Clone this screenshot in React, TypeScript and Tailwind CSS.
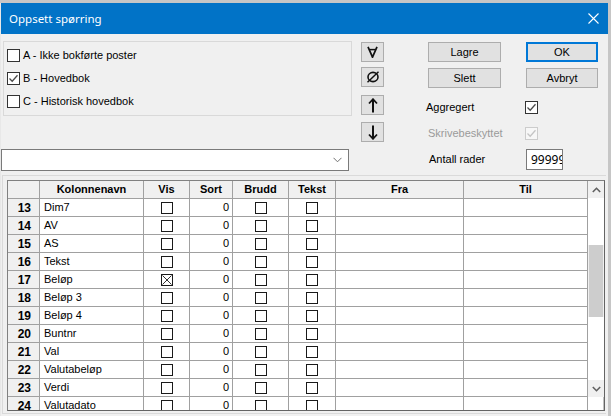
import React from "react";

const FONT = { fontFamily: '"Liberation Sans", Arial, sans-serif' };

function Check({ checked = false, disabled = false }: { checked?: boolean; disabled?: boolean }) {
  return (
    <div
      className={
        "w-[13px] h-[13px] border flex items-center justify-center shrink-0 " +
        (disabled ? "border-[#cccccc] bg-[#f7f7f7]" : "border-[#333333] bg-white")
      }
    >
      {checked && (
        <svg width="11" height="11" viewBox="0 0 11 11">
          <path
            d="M1.5 5.5 L4.2 8.2 L9.5 2.3"
            fill="none"
            stroke={disabled ? "#c4c4c4" : "#4a4a4a"}
            strokeWidth="1.3"
          />
        </svg>
      )}
    </div>
  );
}

function GridCheck({ x = false }: { x?: boolean }) {
  return (
    <div className="w-[12px] h-[12px] border border-[#1a1a1a] bg-white flex items-center justify-center">
      {x && (
        <svg width="10" height="10" viewBox="0 0 10 10">
          <path d="M0.5 0.5 L9.5 9.5 M9.5 0.5 L0.5 9.5" stroke="#333" strokeWidth="1" fill="none" />
        </svg>
      )}
    </div>
  );
}

function Btn({ children, primary = false, w }: { children: React.ReactNode; primary?: boolean; w: string }) {
  return (
    <div
      className={
        "h-[20px] flex items-center justify-center text-[11px] text-black bg-[#e1e1e1] " +
        w +
        (primary ? " border-2 border-[#0078d7]" : " border border-[#adadad]")
      }
    >
      {children}
    </div>
  );
}

function SymBtn({ children, mt }: { children: React.ReactNode; mt: string }) {
  return (
    <div
      className={
        "w-[23px] h-[20px] border border-[#adadad] bg-[#e1e1e1] flex items-center justify-center text-[#111] leading-none " +
        mt
      }
    >
      {children}
    </div>
  );
}

const rows: [number, string, boolean][] = [
  [13, "Dim7", false],
  [14, "AV", false],
  [15, "AS", false],
  [16, "Tekst", false],
  [17, "Beløp", true],
  [18, "Beløp 3", false],
  [19, "Beløp 4", false],
  [20, "Buntnr", false],
  [21, "Val", false],
  [22, "Valutabeløp", false],
  [23, "Verdi", false],
  [24, "Valutadato", false],
];

const cell = "h-[18px] border-r border-b border-[#a0a0a0] flex items-center";
const head = cell + " bg-[#f0f0f0] justify-center font-bold text-[11px]";

export default function App() {
  return (
    <div className="w-[611px] h-[416px] bg-[#c6c6c6] overflow-hidden" style={FONT}>
      <div className="mt-[3px] w-[608px] h-[413px] bg-[#f0f0f0] border-l border-[#e8e8e8] flex flex-col">
        {/* Title bar */}
        <div className="h-[31px] bg-[#0173c7] flex items-center justify-between pl-[8px] pr-[8px] shrink-0">
          <span className="text-white text-[11.5px]" style={{ fontFamily: '"Noto Sans", sans-serif' }}>
            Oppsett spørring
          </span>
          <svg width="11" height="11" viewBox="0 0 11 11" className="mr-[1px]">
            <path d="M0.5 0.5 L10.5 10.5 M10.5 0.5 L0.5 10.5" stroke="#ffffff" strokeWidth="1.1" fill="none" />
          </svg>
        </div>

        {/* Top section */}
        <div className="h-[141px] flex shrink-0">
          <div className="w-[351px] flex flex-col">
            <div className="mt-[7px] ml-[2px] w-[349px] h-[75px] border border-[#d9d9d9] pt-[2px] flex flex-col">
              {[
                ["A - Ikke bokførte poster", false],
                ["B - Hovedbok", true],
                ["C - Historisk hovedbok", false],
              ].map(([label, c]) => (
                <div key={label as string} className="h-[23px] flex items-center pl-[3px] gap-[3px]">
                  <Check checked={c as boolean} />
                  <span className="text-[11px] text-black">{label as string}</span>
                </div>
              ))}
            </div>
            <div className="mt-[33px] w-[348px] h-[22px] bg-white border border-[#7a7a7a] flex items-center justify-end pr-[6px]">
              <svg width="9" height="6" viewBox="0 0 9 6">
                <path d="M0.5 0.8 L4.5 4.8 L8.5 0.8" stroke="#707070" strokeWidth="1" fill="none" />
              </svg>
            </div>
          </div>

          <div className="ml-[9px] flex flex-col">
            <SymBtn mt="mt-[8px]">
              <svg width="11" height="12" viewBox="0 0 11 12">
                <path d="M1 0.8 L5.5 11.2 L10 0.8" stroke="#111" strokeWidth="1.7" fill="none" />
                <path d="M2 3.6 L9 3.6" stroke="#111" strokeWidth="1.5" />
              </svg>
            </SymBtn>
            <SymBtn mt="mt-[5px]">
              <svg width="14" height="12" viewBox="0 0 14 12">
                <ellipse cx="7" cy="6" rx="5" ry="4.6" fill="none" stroke="#111" strokeWidth="1.6" />
                <path d="M1.5 11.2 L12.5 0.8" stroke="#111" strokeWidth="1.5" />
              </svg>
            </SymBtn>
            <SymBtn mt="mt-[8px]">
              <svg width="10" height="15" viewBox="0 0 10 15">
                <path d="M5 14.5 L5 2" stroke="#111" strokeWidth="2" />
                <path d="M1 5.5 L5 1.2 L9 5.5" stroke="#111" strokeWidth="1.8" fill="none" />
              </svg>
            </SymBtn>
            <SymBtn mt="mt-[7px]">
              <svg width="10" height="15" viewBox="0 0 10 15">
                <path d="M5 0.5 L5 13" stroke="#111" strokeWidth="2" />
                <path d="M1 9.5 L5 13.8 L9 9.5" stroke="#111" strokeWidth="1.8" fill="none" />
              </svg>
            </SymBtn>
          </div>

          <div className="ml-[42px] flex flex-col text-[11px] text-black">
            <div className="mt-[8px] flex">
              <div className="w-[99px] pl-[2px]">
                <Btn w="w-[73px]">Lagre</Btn>
              </div>
              <div className="pl-[1px]">
                <Btn w="w-[72px]" primary>
                  OK
                </Btn>
              </div>
            </div>
            <div className="mt-[6px] flex">
              <div className="w-[99px] pl-[2px]">
                <Btn w="w-[73px]">Slett</Btn>
              </div>
              <div className="pl-[1px]">
                <Btn w="w-[72px]">Avbryt</Btn>
              </div>
            </div>
            <div className="mt-[13px] flex items-center h-[13px]">
              <div className="w-[99px]">Aggregert</div>
              <Check checked />
            </div>
            <div className="mt-[13px] flex items-center h-[13px]">
              <div className="w-[99px] pl-[2px] text-[#9a9a9a]">Skrivebeskyttet</div>
              <Check checked disabled />
            </div>
            <div className="mt-[9px] flex items-center h-[21px]">
              <div className="w-[100px] pl-[3px]">Antall rader</div>
              <div
                className="w-[37px] h-[21px] bg-white border border-[#7a7a7a] overflow-hidden flex items-center pl-[4px] whitespace-nowrap text-[12px]"
                style={{ fontFamily: '"Noto Sans", sans-serif' }}
              >
                99999
              </div>
            </div>
          </div>
        </div>

        {/* Grid frame */}
        <div className="ml-[1px] w-[604px] h-[239px] border-t border-l border-b border-[#dadada] pt-[4px] pl-[4px]">
          <div className="w-[598px] h-[231px] border-t border-l border-[#808080] border-r-[#646464] border-r border-b border-b-[#646464] flex overflow-hidden">
            <div className="w-[580px] grid grid-cols-[32px_104px_46px_43px_56px_47px_128px_124px] auto-rows-[18px] text-[11px] text-black">
              <div className={cell + " bg-[#f0f0f0]"} />
              <div className={head}>Kolonnenavn</div>
              <div className={head}>Vis</div>
              <div className={head}>Sort</div>
              <div className={head}>Brudd</div>
              <div className={head}>Tekst</div>
              <div className={head}>Fra</div>
              <div className={head}>Til</div>
              {rows.map(([n, name, x]) => (
                <React.Fragment key={n}>
                  <div className={cell + " bg-[#f0f0f0] justify-end pr-[8px] font-bold text-[12px]"}>{n}</div>
                  <div className={cell + " bg-white pl-[4px]"}>{name}</div>
                  <div className={cell + " bg-white justify-center"}>
                    <GridCheck x={x} />
                  </div>
                  <div className={cell + " bg-white justify-end pr-[3px]"}>0</div>
                  <div className={cell + " bg-white justify-center"}>
                    <GridCheck />
                  </div>
                  <div className={cell + " bg-white justify-center"}>
                    <GridCheck />
                  </div>
                  <div className={cell + " bg-white"} />
                  <div className={cell + " bg-white"} />
                </React.Fragment>
              ))}
            </div>
            {/* Scrollbar */}
            <div className="w-[16px] flex flex-col">
              <div className="h-[17px] bg-[#f0f0f0] flex items-center justify-center">
                <svg width="9" height="6" viewBox="0 0 9 6">
                  <path d="M0.8 5 L4.5 1.3 L8.2 5" stroke="#606060" strokeWidth="1.6" fill="none" />
                </svg>
              </div>
              <div className="h-[47px] bg-white" />
              <div className="h-[72px] mx-[1px] bg-[#cdcdcd]" />
              <div className="h-[63px] bg-white" />
              <div className="h-[17px] bg-[#f0f0f0] flex items-center justify-center">
                <svg width="9" height="6" viewBox="0 0 9 6">
                  <path d="M0.8 1 L4.5 4.7 L8.2 1" stroke="#606060" strokeWidth="1.6" fill="none" />
                </svg>
              </div>
              <div className="flex-1 bg-white border-r border-[#c0c0c0]" />
            </div>
          </div>
        </div>
      </div>
    </div>
  );
}
